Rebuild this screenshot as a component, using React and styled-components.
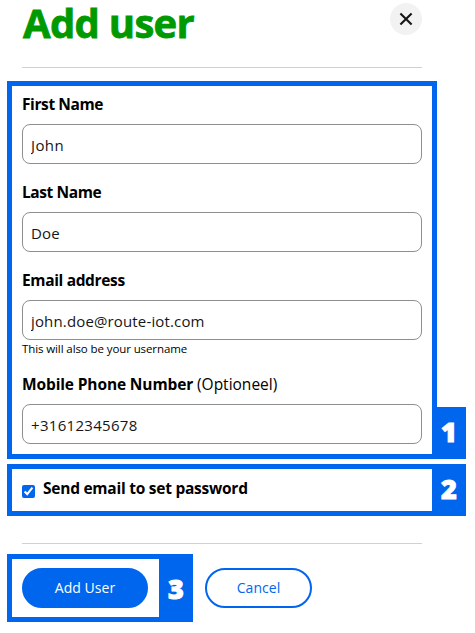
import { styled, createGlobalStyle } from 'styled-components';

const App = () => {
  return (
    <Page>
      <GlobalStyle />
      <Header>
        <Title>Add user</Title>
        <CloseButton type="button" aria-label="Close">
          <svg width="14" height="14" viewBox="0 0 14 14">
            <path d="M1.4 1.4 12.6 12.6M12.6 1.4 1.4 12.6" stroke="#161616" strokeWidth="2.1" />
          </svg>
        </CloseButton>
      </Header>
      <Divider />
      <FieldsFrame>
        <Field>
          <Label htmlFor="first" $track={-0.4}>First Name</Label>
          <Input id="first" defaultValue="John" $track={0.4} />
        </Field>
        <Field>
          <Label htmlFor="last" $track={-0.4}>Last Name</Label>
          <Input id="last" defaultValue="Doe" $track={0.2} />
        </Field>
        <Field $gap={16}>
          <Label htmlFor="email" $track={-0.35}>Email address</Label>
          <Input id="email" defaultValue="john.doe@route-iot.com" $track={0.15} />
          <Hint>This will also be your username</Hint>
        </Field>
        <Field>
          <Label htmlFor="phone" $track={-0.13}>
            Mobile Phone Number <Optional>(Optioneel)</Optional>
          </Label>
          <Input id="phone" defaultValue="+31612345678" $track={0.3} />
        </Field>
        <CornerTag>1</CornerTag>
      </FieldsFrame>
      <CheckFrame>
        <CheckLabel>
          <Checkbox type="checkbox" defaultChecked />
          <CheckText>Send email to set password</CheckText>
        </CheckLabel>
        <Tag>2</Tag>
      </CheckFrame>
      <Divider />
      <Actions>
        <SubmitFrame>
          <Button type="button" $primary $width={126}>Add User</Button>
          <Tag>3</Tag>
        </SubmitFrame>
        <Button type="button" $width={107}>Cancel</Button>
      </Actions>
    </Page>
  );
};

const GlobalStyle = createGlobalStyle`
  * {
    box-sizing: border-box;
  }
  body {
    margin: 0;
    background: #ffffff;
    color: #000000;
    font-family: 'Open Sans', 'Noto Sans', sans-serif;
  }
`;
const Page = styled.div`
  width: 475px;
  height: 633px;
  padding-left: 7px;
`;
const Header = styled.div`
  width: 415px;
  height: 67px;
  padding: 3px 0 0 15px;
  display: flex;
  justify-content: space-between;
  align-items: flex-start;
`;
const Title = styled.h1`
  margin: -3px 0 0 1px;
  font-size: 40px;
  line-height: 46px;
  font-weight: 700;
  letter-spacing: -0.7px;
  white-space: nowrap;
  color: #009900;
  -webkit-text-stroke: 0.8px #009900;
`;
const CloseButton = styled.button`
  width: 32px;
  height: 32px;
  padding: 0;
  border: none;
  border-radius: 50%;
  background: #f2f2f2;
  display: flex;
  justify-content: center;
  align-items: center;
  cursor: pointer;
`;
const Divider = styled.div`
  width: 400px;
  height: 1px;
  margin-left: 15px;
  background: #d1d1d1;
`;
const FieldsFrame = styled.div`
  position: relative;
  width: 430px;
  height: 378px;
  margin-top: 13px;
  padding: 7px 10px 0;
  border: 5px solid #0066ee;
`;
const Field = styled.div`
  display: flex;
  flex-direction: column;
  margin-bottom: ${(props) => props.$gap ?? 17}px;
`;
const Label = styled.label`
  height: 31px;
  font-size: 15.5px;
  line-height: 23px;
  font-weight: 700;
  letter-spacing: ${(props) => props.$track}px;
  white-space: nowrap;
`;
const Optional = styled.span`
  font-weight: 400;
  letter-spacing: 0;
`;
const Input = styled.input`
  width: 400px;
  height: 40px;
  padding: 2px 8px 0;
  border: 1px solid #8f8f8f;
  border-radius: 8px;
  outline: none;
  background: #ffffff;
  color: #161616;
  font-family: inherit;
  font-size: 15px;
  letter-spacing: ${(props) => props.$track}px;
`;
const Hint = styled.div`
  height: 17px;
  font-size: 11.5px;
  line-height: 18px;
  letter-spacing: -0.1px;
`;
const Tag = styled.div`
  width: 34px;
  padding-bottom: 3px;
  display: flex;
  justify-content: center;
  align-items: center;
  background: #0066ee;
  color: #ffffff;
  font-size: 27px;
  line-height: 1;
  font-weight: 800;
  -webkit-text-stroke: 1px #ffffff;
`;
const CornerTag = styled(Tag)`
  position: absolute;
  left: 420px;
  bottom: -5px;
  height: 52px;
`;
const CheckFrame = styled.div`
  width: 459px;
  height: 52px;
  margin: 5px 0 27px;
  border: 5px solid #0066ee;
  border-right: none;
  display: flex;
  justify-content: space-between;
`;
const CheckLabel = styled.label`
  padding: 8px 0 0 10px;
  display: flex;
  align-items: flex-start;
`;
const Checkbox = styled.input`
  width: 13px;
  height: 13px;
  margin: 8px 8px 0 0;
  accent-color: #0066ee;
`;
const CheckText = styled.span`
  font-size: 15.5px;
  line-height: 23px;
  font-weight: 700;
  letter-spacing: -0.25px;
  white-space: nowrap;
`;
const Actions = styled.div`
  margin-top: 10px;
  display: flex;
  align-items: center;
  gap: 12px;
`;
const SubmitFrame = styled.div`
  width: 186px;
  height: 68px;
  padding-left: 10px;
  border: 5px solid #0066ee;
  border-right: none;
  display: flex;
  justify-content: space-between;
  align-items: center;

  ${Tag} {
    height: 58px;
    padding: 1px 0 0;
  }
`;
const Button = styled.button`
  width: ${(props) => props.$width}px;
  height: 40px;
  padding: 0 0 2px;
  border: 2px solid #0066ee;
  border-radius: 20px;
  background: ${(props) => (props.$primary ? '#0066ee' : '#ffffff')};
  color: ${(props) => (props.$primary ? '#ffffff' : '#0066ee')};
  font-family: inherit;
  font-size: 14px;
  letter-spacing: 0.05px;
  cursor: pointer;
`;

export default App;
